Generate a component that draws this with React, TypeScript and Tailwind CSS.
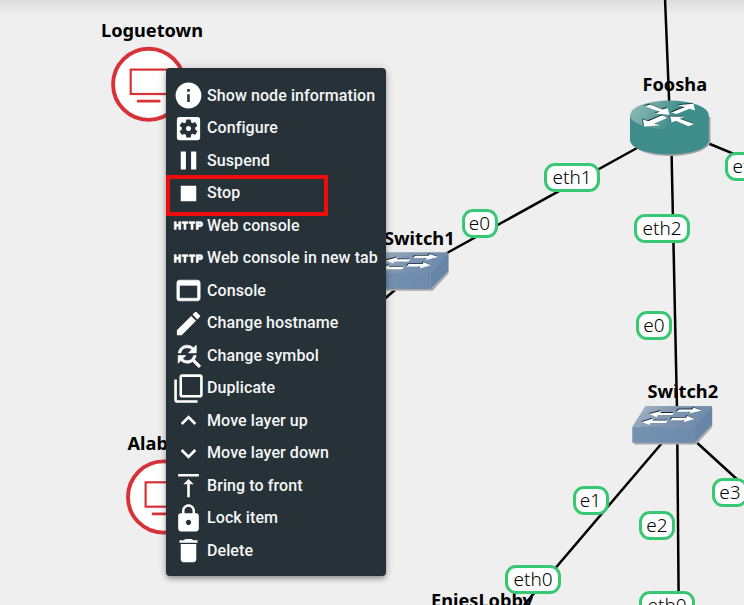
import React from 'react';
import type { IconType } from 'react-icons';
import {
  MdInfo,
  MdSettingsApplications,
  MdPause,
  MdStop,
  MdHttp,
  MdWebAsset,
  MdEdit,
  MdFindReplace,
  MdFilterNone,
  MdKeyboardArrowUp,
  MdKeyboardArrowDown,
  MdVerticalAlignTop,
  MdLock,
  MdDelete,
} from 'react-icons/md';

const menuItems: { label: string; Icon: IconType; heavy?: boolean }[] = [
  { label: 'Show node information', Icon: MdInfo },
  { label: 'Configure', Icon: MdSettingsApplications },
  { label: 'Suspend', Icon: MdPause },
  { label: 'Stop', Icon: MdStop },
  { label: 'Web console', Icon: MdHttp, heavy: true },
  { label: 'Web console in new tab', Icon: MdHttp, heavy: true },
  { label: 'Console', Icon: MdWebAsset, heavy: true },
  { label: 'Change hostname', Icon: MdEdit },
  { label: 'Change symbol', Icon: MdFindReplace, heavy: true },
  { label: 'Duplicate', Icon: MdFilterNone },
  { label: 'Move layer up', Icon: MdKeyboardArrowUp },
  { label: 'Move layer down', Icon: MdKeyboardArrowDown },
  { label: 'Bring to front', Icon: MdVerticalAlignTop },
  { label: 'Lock item', Icon: MdLock },
  { label: 'Delete', Icon: MdDelete },
];

// Link segments between nodes: x1, y1, x2, y2
const links = [
  [665, -2, 669.5, 110],
  [637, 148, 447, 253],
  [395, 290, 376, 306],
  [671.5, 150, 677, 410],
  [705, 142, 744, 158],
  [662, 443, 524, 605],
  [677.3, 440, 678.7, 605],
  [694, 440, 740, 482],
];

const ports = [
  { text: 'e0', place: 'left-[461.5px] top-[209px] w-9' },
  { text: 'eth1', place: 'left-[544px] top-[163px] w-14' },
  { text: 'eth2', place: 'left-[634px] top-[214px] w-14' },
  { text: 'e0', place: 'left-[636px] top-[311px] w-9' },
  { text: 'eth0', place: 'left-[725px] top-[151.5px] w-[54px]' },
  { text: 'e1', place: 'left-[572.5px] top-[486px] w-9' },
  { text: 'e2', place: 'left-[639px] top-[511px] w-9' },
  { text: 'e3', place: 'left-[712px] top-[478px] w-9' },
  { text: 'eth0', place: 'left-[505px] top-[564.5px] w-14' },
  { text: 'eth0', place: 'left-[639px] top-[591px] w-14' },
];

const nodeLabels = [
  { text: 'Loguetown', place: 'left-[101px] top-[18px]' },
  { text: 'Alabasta', place: 'left-[127.5px] top-[431px]' },
  { text: 'Foosha', place: 'left-[642.5px] top-[72px]' },
  { text: 'Switch1', place: 'left-[384px] top-[226px]' },
  { text: 'Switch2', place: 'left-[647.5px] top-[379px]' },
  { text: 'EniesLobby', place: 'left-[431px] top-[588px]' },
];

function Computer({ x, y }: { x: number; y: number }) {
  return (
    <g transform={`translate(${x} ${y})`} stroke="#d73238" fill="none">
      <circle r="35.6" fill="#fff" strokeWidth="3.9" />
      <rect x="-18" y="-14.7" width="37" height="24.4" strokeWidth="2.2" />
      <path d="M-10.5 16.9H10.5" strokeWidth="2.8" strokeLinecap="round" />
    </g>
  );
}

function Switch({ x, y }: { x: number; y: number }) {
  return (
    <g transform={`translate(${x} ${y})`}>
      <path d="M2 22V38.5H64L80 21V2Z" fill="#a6a8aa" />
      <path d="M0 20.7H62V36.7H0Z" fill="url(#front)" />
      <path d="M62 20.7L79.7 0V18.5L62 36.7Z" fill="#6685a7" />
      <path d="M13 0H79.7L62 20.7H0Z" fill="url(#top)" />
      <g fill="#1f2e3d" transform="translate(-.8 -.8)"><Arrows /></g>
      <g fill="#fff"><Arrows /></g>
    </g>
  );
}

function Arrows() {
  return (
    <>
      <path d="M46.5 3.4H60L61 1.6L69.5 4.6L57 7.6L58 5.8H44.5Z" />
      <path d="M42 6.9L39.5 9.1H25.5L24.5 11.2L16.8 8.1L29 4.9L28 6.9Z" />
      <path d="M40 11.8H54L55 9.8L62 13L51 16.3L52 14.2H38Z" />
      <path d="M35.5 14.5L33.5 17H18L17 19L9.5 16L21 12.6L20 14.5Z" />
    </>
  );
}

function RouterArrows() {
  return (
    <>
      <path d="M645 106.2L650.5 104.4L662.3 109.6L667.5 108L669.5 114.8L655 113.6L659.8 111.8Z" />
      <path d="M671.5 112.4L685 106.9L677.5 105.3L693.5 103.7L695 110.5L689.5 108.8L676.5 114Z" />
      <path d="M663.5 115.5L667 118L654.5 123.6L660 125.2L644 126.6L643 119.5L648.3 121.2L661 115.8Z" />
      <path d="M670 116.6L684.5 116.8L679.6 118.7L694 124L688.5 126.2L675.8 120.7L671.6 122.4Z" />
    </>
  );
}

function Router() {
  return (
    <g>
      <path d="M632.5 117V143C639 161 705 160 710.5 142V117Z" fill="#a3a5a5" />
      <path d="M630 115V140C631 159 708 159 708.8 140V115Z" fill="#3e8d8b" />
      <ellipse cx="669.4" cy="115" rx="39.4" ry="14.4" fill="url(#router)" />
      <g fill="#17403f" transform="translate(-.9 -.9)"><RouterArrows /></g>
      <g fill="#fff"><RouterArrows /></g>
    </g>
  );
}

function Topology() {
  return (
    <svg className="absolute inset-0" width="744" height="605" viewBox="0 0 744 605">
      <defs>
        <linearGradient id="front" x1="0" x2="1">
          <stop offset="0" stopColor="#7592b0" />
          <stop offset="1" stopColor="#6c8bad" />
        </linearGradient>
        <linearGradient id="top" x1="0" x2="1" y1="0" y2="0.3">
          <stop offset="0" stopColor="#a9bac9" />
          <stop offset="0.5" stopColor="#8299b2" />
          <stop offset="1" stopColor="#6c8bab" />
        </linearGradient>
        <linearGradient id="router" x1="0" x2="1" y1="0.3" y2="0.5">
          <stop offset="0" stopColor="#8fbab8" />
          <stop offset="0.3" stopColor="#69a5a3" />
          <stop offset="0.6" stopColor="#3e8d8b" />
        </linearGradient>
      </defs>
      <g stroke="#000" strokeWidth="2.5">
        {links.map(([x1, y1, x2, y2], i) => (
          <line key={i} x1={x1} y1={y1} x2={x2} y2={y2} />
        ))}
      </g>
      <Computer x={148.7} y={84.3} />
      <Computer x={163.6} y={497} />
      <Router />
      <Switch x={632.3} y={406} />
      <Switch x={368.6} y={252.3} />
    </svg>
  );
}

function ContextMenu() {
  return (
    <div className="absolute left-[166px] top-[68px] flex h-[508px] w-[220px] flex-col rounded bg-[#263238] pt-[11.5px] font-['Roboto',sans-serif] shadow-[0_2px_4px_-1px_rgba(0,0,0,0.2),0_4px_5px_rgba(0,0,0,0.14),0_1px_10px_rgba(0,0,0,0.2)]">
      {menuItems.map(({ label, Icon, heavy }) => (
        <div key={label} className="flex h-[32.5px] shrink-0 items-center pl-[6.5px] text-white">
          <Icon
            className={
              heavy
                ? 'size-[31px] shrink-0 stroke-white stroke-[0.5] [&>path[fill=none]]:stroke-none'
                : 'size-[31px] shrink-0'
            }
          />
          <span className="ml-[3.5px] text-base leading-5 font-medium tracking-[0.09px] whitespace-nowrap text-[#f4f6f7]">
            {label}
          </span>
        </div>
      ))}
    </div>
  );
}

export default function App() {
  return (
    <main className="relative h-[605px] w-[744px] overflow-hidden bg-[#efefef] font-['Noto_Sans',sans-serif] text-black">
      <div className="h-4 bg-linear-to-b from-[#dedede] to-[#efefef]" />
      <Topology />
      {nodeLabels.map(({ text, place }) => (
        <span key={text} className={`absolute text-[18.2px] leading-6 font-bold whitespace-nowrap ${place}`}>
          {text}
        </span>
      ))}
      {ports.map(({ text, place }, i) => (
        <span
          key={i}
          className={`absolute flex h-[29px] items-center justify-center rounded-[11px] border-3 border-[#38c773] bg-white text-[19px] leading-none font-[350] ${place}`}
        >
          {text}
        </span>
      ))}
      <ContextMenu />
      <div className="absolute left-[166px] top-[175px] h-[41px] w-[162px] border-4 border-[#ee0c0c]" />
    </main>
  );
}
